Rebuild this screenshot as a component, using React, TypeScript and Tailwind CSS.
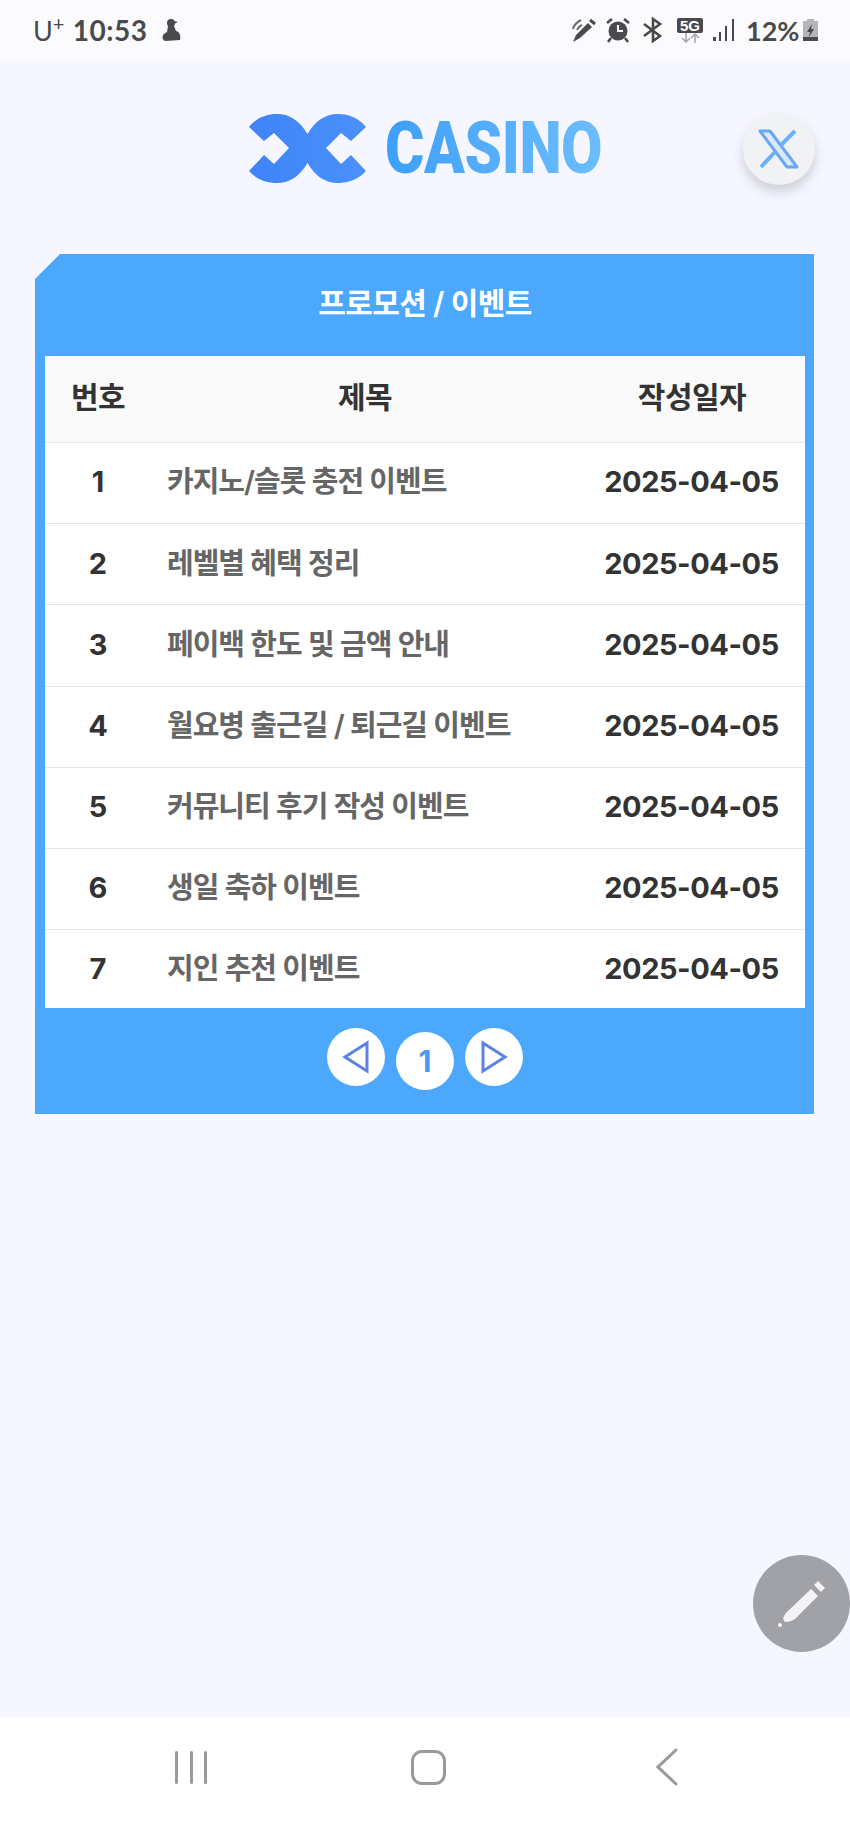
import React from 'react'

const fontStack = "font-['Inter','Noto_Sans_CJK_KR',sans-serif]"

const rows = [
    { id: 1, title: '카지노/슬롯 충전 이벤트' },
    { id: 2, title: '레벨별 혜택 정리' },
    { id: 3, title: '페이백 한도 및 금액 안내' },
    { id: 4, title: '월요병 출근길 / 퇴근길 이벤트' },
    { id: 5, title: '커뮤니티 후기 작성 이벤트' },
    { id: 6, title: '생일 축하 이벤트' },
    { id: 7, title: '지인 추천 이벤트' },
]

const StatusBar = () => (
    <div className="h-[60px] shrink-0 bg-[#fbfbfe] flex items-center text-[#4a4a4c] pl-[33px] pr-[31px]">
        <div className="flex items-center font-['Lato',sans-serif]">
            <span className="text-[27px] leading-none">U</span>
            <span className="text-[20px] leading-none -mt-[14px] w-[20px]">+</span>
            <span className="text-[28px] leading-none font-bold w-[88px] tracking-[0.5px]">10:53</span>
            <svg width="22" height="24" viewBox="0 0 22 24" fill="#4a4a4c">
                <circle cx="10" cy="5" r="4" />
                <path d="M7 8 L13 8 L15 13 C19 14 20 18 19 22 L4 23 C0 21 1 16 6 14 Z" />
                <path d="M13 3 L17 4 L13 6 Z" />
            </svg>
        </div>
        <div className="ml-auto flex items-center">
            <svg width="26" height="26" viewBox="0 0 26 26" fill="none" stroke="#4a4a4c">
                <path d="M3 25 L6 18 L18 6 L22 10 L10 21 Z" fill="#4a4a4c" stroke="none" />
                <path d="M3 12 C4 8 7 5 11 3 M7 13 C8 11 9 9 12 8" strokeWidth="2" opacity="0.8" />
                <path d="M20 3 L25 7" strokeWidth="3" />
            </svg>
            <svg className="ml-[10px]" width="24" height="26" viewBox="0 0 24 26" fill="none">
                <circle cx="12" cy="14" r="9.5" fill="#4a4a4c" />
                <path d="M12 8 V14 H17" stroke="#fbfbfe" strokeWidth="2" />
                <path d="M1 6 L6 2 M23 6 L18 2 M5 21 L2 25 M19 21 L22 25" stroke="#4a4a4c" strokeWidth="2.5" />
            </svg>
            <svg className="ml-[12px]" width="22" height="26" viewBox="0 0 22 26" fill="none" stroke="#4a4a4c" strokeWidth="2.6">
                <path d="M2 7 L18 19 L11 24 V2 L18 7 L2 19" />
            </svg>
            <div className="ml-[13px] w-[26px] flex flex-col items-center">
                <div className="w-[26px] h-[15px] bg-[#4a4a4c] rounded-[2px] text-white text-[15px] leading-[15px] font-bold text-center font-['Liberation_Sans',sans-serif]">
                    5G
                </div>
                <svg width="20" height="10" viewBox="0 0 20 10" fill="none" stroke="#aaaaae" strokeWidth="1.6">
                    <path d="M6 0 V9 M2 5 L6 9 L10 5 M15 10 V1 M11 5 L15 1 L19 5" />
                </svg>
            </div>
            <svg className="ml-[10px]" width="22" height="24" viewBox="0 0 22 24" fill="#4a4a4c">
                <rect x="0" y="19" width="3" height="4" />
                <rect x="6" y="14" width="2" height="9" />
                <rect x="12" y="8" width="2" height="15" />
                <rect x="19" y="1" width="2" height="22" />
            </svg>
            <span className="ml-[11px] w-[53px] text-[27px] leading-none font-bold font-['Lato',sans-serif]">12%</span>
            <svg className="ml-[3px]" width="17" height="24" viewBox="0 0 17 24">
                <path d="M5 1 H12 V3 H16 V23 H1 V3 H5 Z" fill="#b5b5b8" />
                <rect x="1" y="19" width="15" height="4" fill="#4a4a4c" />
                <path d="M10 6 L5 14 H8 L7 19 L12 11 H9 Z" fill="#4a4a4c" />
            </svg>
        </div>
    </div>
)

const Logo = () => (
    <div className="flex items-center">
        <svg width="117" height="69" viewBox="0 0 117 69">
            <defs>
                <linearGradient id="logoMark" x1="0" y1="0" x2="1" y2="0">
                    <stop offset="0" stopColor="#3f84f8" />
                    <stop offset="1" stopColor="#4a91fb" />
                </linearGradient>
            </defs>
            <path
                d="M0 13 C7 4 17 0 28 0 C41 0 51 7 58.500 20 C66 7 76 0 89 0 C100 0 110 4 117 13 L102 27 L92 19 L77 34 L92 50 L102 41 L117 57 C110 65 100 69 89 69 C76 69 66 62 58.500 49 C51 62 41 69 28 69 C17 69 7 65 0 57 L15 41 L25 50 L40 34 L25 19 L15 27 Z"
                fill="url(#logoMark)"
            />
        </svg>
        <div className="w-[216px] ml-[19px] h-[70px] overflow-visible pt-[1px]">
            <span className="inline-block origin-left scale-x-[0.834] font-['Roboto',sans-serif] font-black text-[72px] leading-[70px] tracking-[-0.5px] text-transparent bg-clip-text bg-gradient-to-r from-[#3c9ff9] to-[#6cbdff]">
                CASINO
            </span>
        </div>
    </div>
)

const XButton = () => (
    <div className="absolute left-[743px] top-[53px] w-[72px] h-[72px] rounded-full bg-[#f1f2f5] shadow-[0_7px_12px_rgba(0,0,0,0.16)] flex items-center justify-center">
        <svg width="42" height="40" viewBox="0 0 42 40" fill="none" stroke="#6aa8f6" strokeLinejoin="round">
            <path d="M2 2 H12 L39 38 H29 Z" strokeWidth="3" fill="#dbe9fb" />
            <path d="M37 2 L23 16 M17 23 L3 38" strokeWidth="4" stroke="#6db0f9" />
        </svg>
    </div>
)

const PageButton = ({ children, className = '' }: { children: React.ReactNode; className?: string }) => (
    <div className={`w-[58px] h-[58px] rounded-full bg-white flex items-center justify-center ${className}`}>
        {children}
    </div>
)

const EventPanel = () => (
    <div className="ml-[35px] w-[779px] h-[860px] bg-[#4ba8fd] pl-[10px] pr-[9px] flex flex-col [clip-path:polygon(25px_0,100%_0,100%_100%,0_100%,0_25px)]">
        <div className="h-[102px] shrink-0 flex items-center justify-center text-white text-[30px] font-semibold tracking-[-0.6px] pb-[3px]">
            프로모션 / 이벤트
        </div>
        <div className="bg-white h-[652px] shrink-0 flex flex-col">
            <div className="h-[87px] shrink-0 bg-[#fafafa] border-b border-[#e6e6e8] grid grid-cols-[106px_428px_1fr] items-center text-center text-[#333333] text-[30px] font-semibold tracking-[-0.5px] pb-[3px]">
                <div>번호</div>
                <div>제목</div>
                <div>작성일자</div>
            </div>
            {rows.map((row, i) => (
                <div
                    key={row.id}
                    className={`grid grid-cols-[106px_426px_1fr] items-center ${
                        i < rows.length - 1 ? 'h-[81.2px] shrink-0 border-b border-[#e6e6e8] pb-[2px]' : 'flex-1'
                    }`}
                >
                    <div className="text-center text-[#333333] text-[29px] font-bold">{row.id}</div>
                    <div className="pl-[16px] text-[#666666] text-[29px] font-semibold tracking-[-1px] whitespace-nowrap">
                        {row.title}
                    </div>
                    <div className="text-center text-[#333333] text-[29px] font-bold tracking-[-0.45px] pl-[1px]">2025-04-05</div>
                </div>
            ))}
        </div>
        <div className="flex justify-center gap-[11px] pt-[20px]">
            <PageButton>
                <svg width="28" height="34" viewBox="0 0 28 34" fill="none" stroke="#5b82e4" strokeWidth="3">
                    <path d="M25 3 V31 L3 17 Z" />
                </svg>
            </PageButton>
            <PageButton className="mt-[4px] text-[#4a9bf0] text-[30px] font-bold">1</PageButton>
            <PageButton>
                <svg width="28" height="34" viewBox="0 0 28 34" fill="none" stroke="#5b82e4" strokeWidth="3">
                    <path d="M3 3 V31 L25 17 Z" />
                </svg>
            </PageButton>
        </div>
    </div>
)

const WriteButton = () => (
    <div className="absolute right-0 top-[1555px] w-[97px] h-[97px] rounded-full bg-[#a1a2a8] flex items-center justify-center">
        <svg width="50" height="50" viewBox="0 0 50 50" fill="#f4f4f6">
            <path d="M6 40 C7 36 9 34 11 32 L34 10 L41 17 L18 40 C15 42 12 43 8 43 Z" />
            <path d="M37 6 L41 2 L48 9 L44 13 Z" />
            <circle cx="3" cy="46" r="2" />
        </svg>
    </div>
)

const NavBar = () => (
    <div className="h-[106px] shrink-0 bg-white flex items-center pl-[175px] pb-[6px]">
        <div className="w-[32px] flex justify-between">
            <div className="w-[3px] h-[33px] rounded-full bg-[#98999b]" />
            <div className="w-[3px] h-[33px] rounded-full bg-[#98999b]" />
            <div className="w-[3px] h-[33px] rounded-full bg-[#98999b]" />
        </div>
        <div className="ml-[204px] w-[35px] h-[35px] rounded-[11px] border-[3px] border-[#98999b]" />
        <svg className="ml-[210px]" width="22" height="38" viewBox="0 0 22 38" fill="none" stroke="#98999b" strokeWidth="3" strokeLinecap="round">
            <path d="M20 2 L2 19 L20 36" />
        </svg>
    </div>
)

export default function App() {
    return (
        <div className={`relative w-[850px] h-[1823px] flex flex-col bg-[#f5f6ff] overflow-hidden ${fontStack}`}>
            <StatusBar />
            <div className="flex-1">
                <div className="relative h-[194px] flex items-center justify-center pb-[18px]">
                    <Logo />
                    <XButton />
                </div>
                <EventPanel />
            </div>
            <WriteButton />
            <NavBar />
        </div>
    )
}
